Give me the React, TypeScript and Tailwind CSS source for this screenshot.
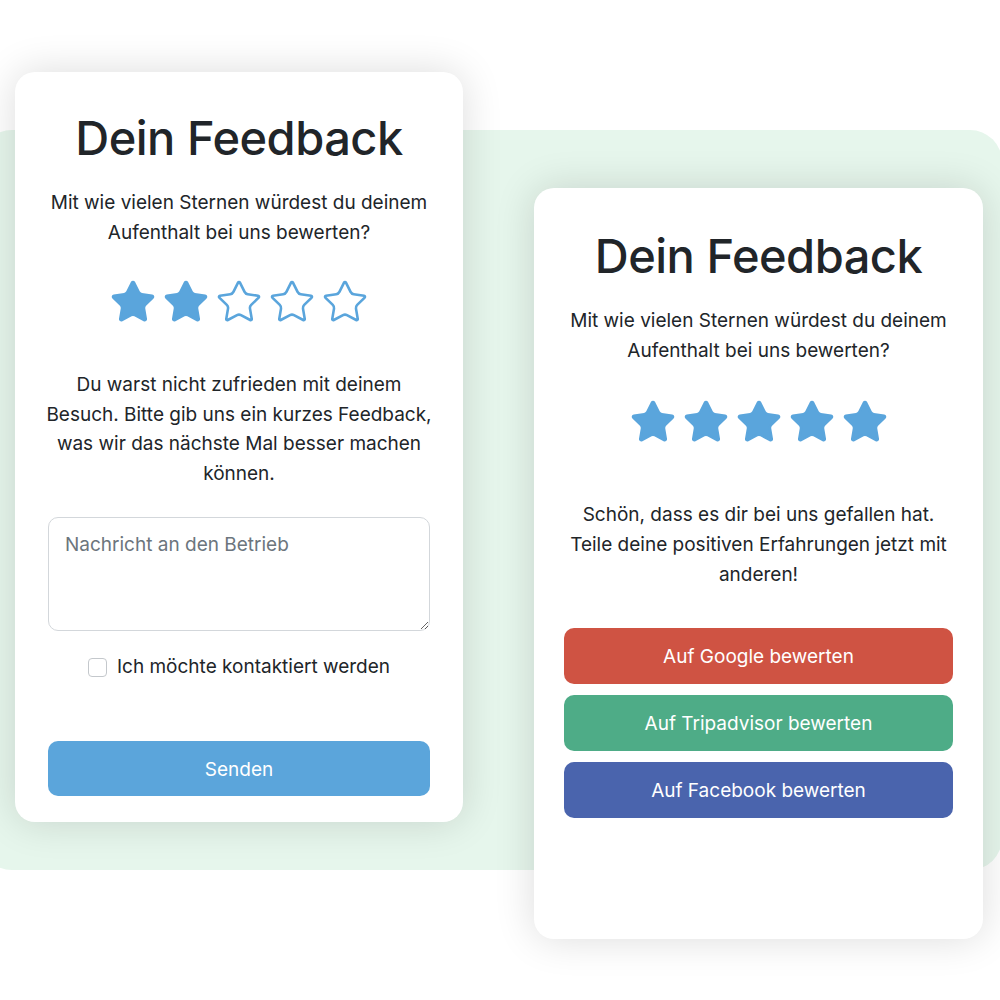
import { Star } from 'lucide-react';

const FONT = "font-['Inter','Noto_Sans',sans-serif]";

function Stars({ filled }: { filled: number }) {
  return (
    <div className="flex justify-center gap-[5px]">
      {[0, 1, 2, 3, 4].map((i) => (
        <Star
          key={i}
          size={48}
          strokeWidth={1.3}
          color="#5aa5dc"
          fill={i < filled ? '#5aa5dc' : 'none'}
        />
      ))}
    </div>
  );
}

function CardHeader() {
  return (
    <>
      <h1 className="text-[47px] leading-[58px] font-medium tracking-[-0.5px] text-[#212529]">Dein Feedback</h1>
      <p className="mt-[21px] text-[19px] leading-[30px] text-[#212529] whitespace-nowrap">
        Mit wie vielen Sternen würdest du deinem
        <br />
        Aufenthalt bei uns bewerten?
      </p>
    </>
  );
}

function NegativeCard() {
  return (
    <div className="w-[448px] h-[750px] mt-[72px] shrink-0 bg-white rounded-[20px] shadow-[0_0_40px_rgba(0,0,0,0.14)] px-[33px] pt-[37px] flex flex-col items-center text-center">
      <CardHeader />
      <div className="mt-[30px]">
        <Stars filled={2} />
      </div>
      <p className="mt-[44px] text-[19px] leading-[29.5px] text-[#212529] whitespace-nowrap">
        Du warst nicht zufrieden mit deinem
        <br />
        Besuch. Bitte gib uns ein kurzes Feedback,
        <br />
        was wir das nächste Mal besser machen
        <br />
        können.
      </p>
      <textarea
        placeholder="Nachricht an den Betrieb"
        className="mt-[29px] w-full h-[114px] rounded-[10px] border border-[#d3d7db] px-4 py-3 text-[19px] leading-[30px] text-[#212529] placeholder:text-[#6c757d] outline-none resize-y"
      />
      <label className="mt-[24px] flex items-center gap-[10px] text-[19px] leading-6 text-[#212529]">
        <input type="checkbox" className="appearance-none w-[19px] h-[19px] rounded-[4px] border border-[#c4c8cc] bg-white" />
        Ich möchte kontaktiert werden
      </label>
      <button className="mt-[62px] w-full h-[55px] pt-[3px] rounded-[10px] bg-[#5ba5db] text-white text-[19px]">Senden</button>
    </div>
  );
}

function PositiveCard() {
  const buttons = [
    { label: 'Auf Google bewerten', cls: 'bg-[#cf5343]' },
    { label: 'Auf Tripadvisor bewerten', cls: 'bg-[#4eac87]' },
    { label: 'Auf Facebook bewerten', cls: 'bg-[#4a64ad]' },
  ];
  return (
    <div className="w-[449px] h-[751px] mt-[188px] shrink-0 bg-white rounded-[20px] shadow-[0_0_40px_rgba(0,0,0,0.14)] px-[30px] pt-[39px] flex flex-col items-center text-center">
      <CardHeader />
      <div className="mt-[32px]">
        <Stars filled={5} />
      </div>
      <p className="mt-[54px] text-[19px] leading-[30px] text-[#212529] whitespace-nowrap">
        Schön, dass es dir bei uns gefallen hat.
        <br />
        Teile deine positiven Erfahrungen jetzt mit
        <br />
        anderen!
      </p>
      <div className="mt-[38px] w-full flex flex-col gap-[11px]">
        {buttons.map((b) => (
          <button key={b.label} className={`w-full h-[56px] pt-[3px] rounded-[10px] text-white text-[19px] ${b.cls}`}>
            {b.label}
          </button>
        ))}
      </div>
    </div>
  );
}

export default function App() {
  return (
    <div className={`relative w-[1000px] h-[1000px] overflow-hidden bg-white ${FONT}`}>
      {/* mint backdrop panel behind the two cards */}
      <div className="absolute left-[-20px] top-[130px] w-[1022px] h-[740px] rounded-[32px] bg-[#e6f6ec]" />
      <div className="relative flex items-start pl-[15px] gap-[71px]">
        <NegativeCard />
        <PositiveCard />
      </div>
    </div>
  );
}
